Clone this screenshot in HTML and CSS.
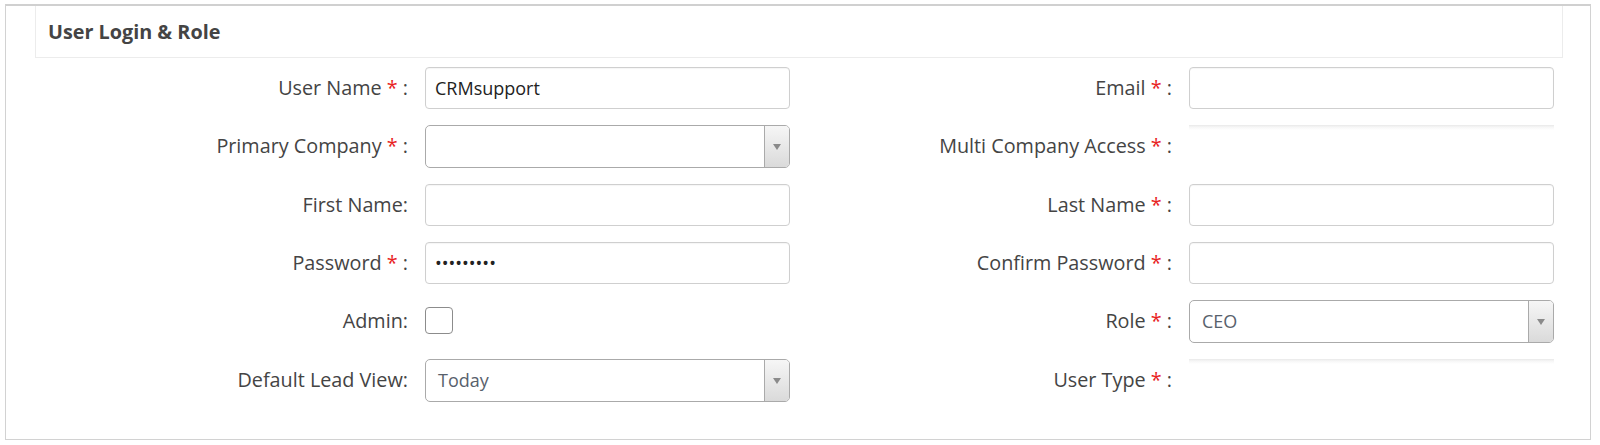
FILE: index.html
```html
<!DOCTYPE html>
<html lang="en">
<head>
<meta charset="utf-8">
<title>User Login &amp; Role</title>
<link rel="stylesheet" href="styles.css">
</head>
<body>
<div class="panel">
  <div class="panel-head"><h3 class="panel-title">User Login &amp; Role</h3></div>
  <div class="form-grid">
    <div class="field">
      <label class="lbl">User Name <span class="req">*</span> :</label>
      <input class="text-input" type="text" value="CRMsupport">
    </div>
    <div class="field">
      <label class="lbl">Email <span class="req">*</span> :</label>
      <input class="text-input" type="text" value="">
    </div>

    <div class="field">
      <label class="lbl">Primary Company <span class="req">*</span> :</label>
      <div class="chosen"><span class="chosen-value"></span><span class="chosen-arrow"><span class="tri"></span></span></div>
    </div>
    <div class="field">
      <label class="lbl">Multi Company Access <span class="req">*</span> :</label>
      <div class="multi"></div>
    </div>

    <div class="field">
      <label class="lbl">First Name:</label>
      <input class="text-input" type="text" value="">
    </div>
    <div class="field">
      <label class="lbl">Last Name <span class="req">*</span> :</label>
      <input class="text-input" type="text" value="">
    </div>

    <div class="field">
      <label class="lbl">Password <span class="req">*</span> :</label>
      <input class="text-input" type="password" value="123456789">
    </div>
    <div class="field">
      <label class="lbl">Confirm Password <span class="req">*</span> :</label>
      <input class="text-input" type="password" value="">
    </div>

    <div class="field">
      <label class="lbl">Admin:</label>
      <div class="check-wrap"><input class="check" type="checkbox"></div>
    </div>
    <div class="field">
      <label class="lbl">Role <span class="req">*</span> :</label>
      <div class="chosen"><span class="chosen-value">CEO</span><span class="chosen-arrow"><span class="tri"></span></span></div>
    </div>

    <div class="field">
      <label class="lbl">Default Lead View:</label>
      <div class="chosen"><span class="chosen-value">Today</span><span class="chosen-arrow"><span class="tri"></span></span></div>
    </div>
    <div class="field">
      <label class="lbl">User Type <span class="req">*</span> :</label>
      <div class="multi"></div>
    </div>
  </div>
</div>
</body>
</html>
```

FILE: styles.css
```css
html, body {
  margin: 0;
  padding: 0;
  background: #fff;
}

body {
  font-family: "Open Sans", "Liberation Sans", sans-serif;
  color: #444;
}

.panel {
  box-sizing: border-box;
  margin: 4px 9px 0 5px;
  height: 436px;
  border: 1px solid #d2d2d2;
  border-top: 2px solid #d0d0d0;
  padding: 0 27px 0 29px;
}

.panel-head {
  box-sizing: border-box;
  height: 52px;
  border: 1px solid #ececec;
  border-top: none;
  display: flex;
  align-items: center;
  padding-left: 12px;
}

.panel-title {
  margin: 0;
  font-size: 19.8px;
  font-weight: 700;
  color: #444;
  letter-spacing: 0;
}

.form-grid {
  margin-top: 9px;
  display: grid;
  grid-template-columns: 1fr 1fr;
  row-gap: 16px;
}

.field {
  display: grid;
  grid-template-columns: 373px 365px;
  column-gap: 17px;
  align-items: center;
}

.lbl {
  text-align: right;
  font-size: 19.8px;
  color: #444;
  white-space: nowrap;
  margin-top: -2px;
}

.req {
  color: #e8231f;
}

.text-input {
  box-sizing: border-box;
  width: 365px;
  height: 42px;
  margin: 0;
  border: 1px solid #cfcfcf;
  border-radius: 4px;
  padding: 0 9px;
  font-family: "Open Sans", "Liberation Sans", sans-serif;
  font-size: 18px;
  color: #222;
  background: #fff;
  box-shadow: inset 0 1px 1px rgba(0, 0, 0, 0.04);
  outline: none;
}

.chosen {
  box-sizing: border-box;
  width: 365px;
  height: 43px;
  border: 1px solid #aaa;
  border-radius: 5px;
  background: #fff;
  display: flex;
  align-items: stretch;
  overflow: hidden;
}

.chosen-value {
  flex: 1;
  display: flex;
  align-items: center;
  padding-left: 12px;
  padding-bottom: 2px;
  font-size: 18px;
  color: #58616c;
}

.chosen-arrow {
  width: 24px;
  border-left: 1px solid #aaa;
  background: linear-gradient(#f6f6f6, #dadada);
  display: flex;
  align-items: center;
  justify-content: center;
}

.tri {
  width: 0;
  height: 0;
  border-left: 4px solid transparent;
  border-right: 4px solid transparent;
  border-top: 6px solid #8a8a8a;
}

.multi {
  box-sizing: border-box;
  width: 365px;
  height: 43px;
  background: linear-gradient(#e9e9e9 0, #f6f6f6 2px, #fff 5px);
}

.check-wrap {
  display: flex;
  align-items: center;
  height: 43px;
}

.check {
  -webkit-appearance: none;
  appearance: none;
  box-sizing: border-box;
  width: 28px;
  height: 27px;
  margin: -3px 0 0 0;
  border: 1px solid #8c8c8c;
  border-radius: 4px;
  background: #fff;
}
```
